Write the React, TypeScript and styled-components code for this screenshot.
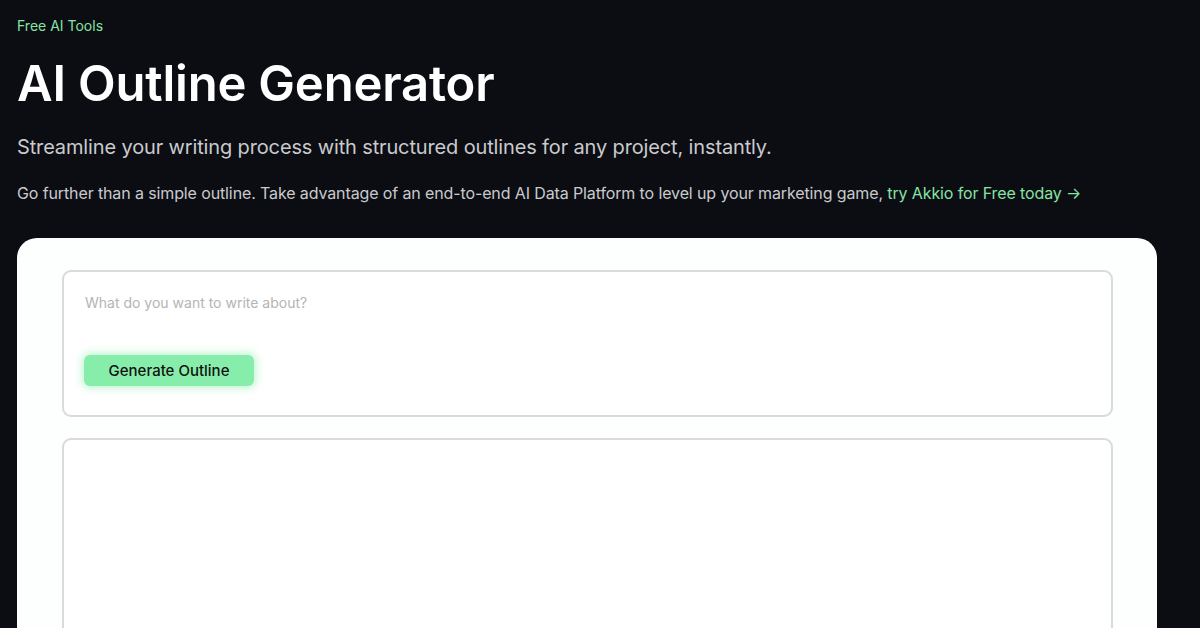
import React from 'react';
import styled, { createGlobalStyle } from 'styled-components';

const GlobalStyle = createGlobalStyle`
  html, body {
    margin: 0;
    padding: 0;
    background: #0b0d13;
    font-family: Inter, "Liberation Sans", sans-serif;
    overflow: hidden;
  }
`;

const Page = styled.div`
  width: 1200px;
  height: 628px;
  overflow: hidden;
  padding: 0 43px 0 17px;
  box-sizing: border-box;
`;

const Eyebrow = styled.div`
  padding-top: 17px;
  font-size: 14px;
  line-height: 18px;
  color: #86e3a4; /* green */
`;

const Title = styled.h1`
  margin: 21px 0 0;
  font-size: 49px;
  line-height: 56px;
  font-weight: 600;
  letter-spacing: -0.2px;
  color: #ffffff;
`;

const Lead = styled.p`
  margin: 21px 0 0;
  font-size: 20px;
  line-height: 28px;
  letter-spacing: -0.14px;
  color: #c9cacc;
`;

const Note = styled.p`
  margin: 21px 0 0;
  font-size: 16px;
  line-height: 22px;
  letter-spacing: -0.12px;
  color: #c9cacc;
`;

const Link = styled.a`
  color: #86e3a4;
  text-decoration: none;
`;

const Card = styled.div`
  margin-top: 34px;
  background: #fdfefe;
  border-radius: 20px 20px 0 0;
  padding: 32px 44px 0 45px;
  display: flex;
  flex-direction: column;
  gap: 21px;
  height: 400px;
`;

const Box = styled.div<{ $tall?: boolean }>`
  flex-shrink: 0;
  border: 2px solid #dadada;
  border-radius: 9px;
  background: #ffffff;
  box-sizing: border-box;
  height: ${(p) => (p.$tall ? '260px' : '147px')};
  padding: 22px 20px;
  display: flex;
  flex-direction: column;
  align-items: flex-start;
`;

const Prompt = styled.div`
  font-size: 14px;
  line-height: 18px;
  color: #b4b4b4;
  padding-left: 1px;
`;

const Button = styled.button`
  margin-top: 43px;
  width: 170px;
  height: 31px;
  border: none;
  border-radius: 6px;
  background: #86eeaa;
  box-shadow: 0 0 8px 2px rgba(134, 238, 170, 0.55);
  color: #111111;
  font-family: Inter, "Liberation Sans", sans-serif;
  font-size: 15px;
  font-weight: 500;
  cursor: pointer;
`;

const App: React.FC = () => {
  return (
    <Page>
      <GlobalStyle />
      <Eyebrow>Free AI Tools</Eyebrow>
      <Title>AI Outline Generator</Title>
      <Lead>Streamline your writing process with structured outlines for any project, instantly.</Lead>
      <Note>
        Go further than a simple outline. Take advantage of an end-to-end AI Data Platform to level up your marketing
        game, <Link href="#">try Akkio for Free today →</Link>
      </Note>
      <Card>
        <Box>
          <Prompt>What do you want to write about?</Prompt>
          <Button>Generate Outline</Button>
        </Box>
        <Box $tall />
      </Card>
    </Page>
  );
};

export default App;
